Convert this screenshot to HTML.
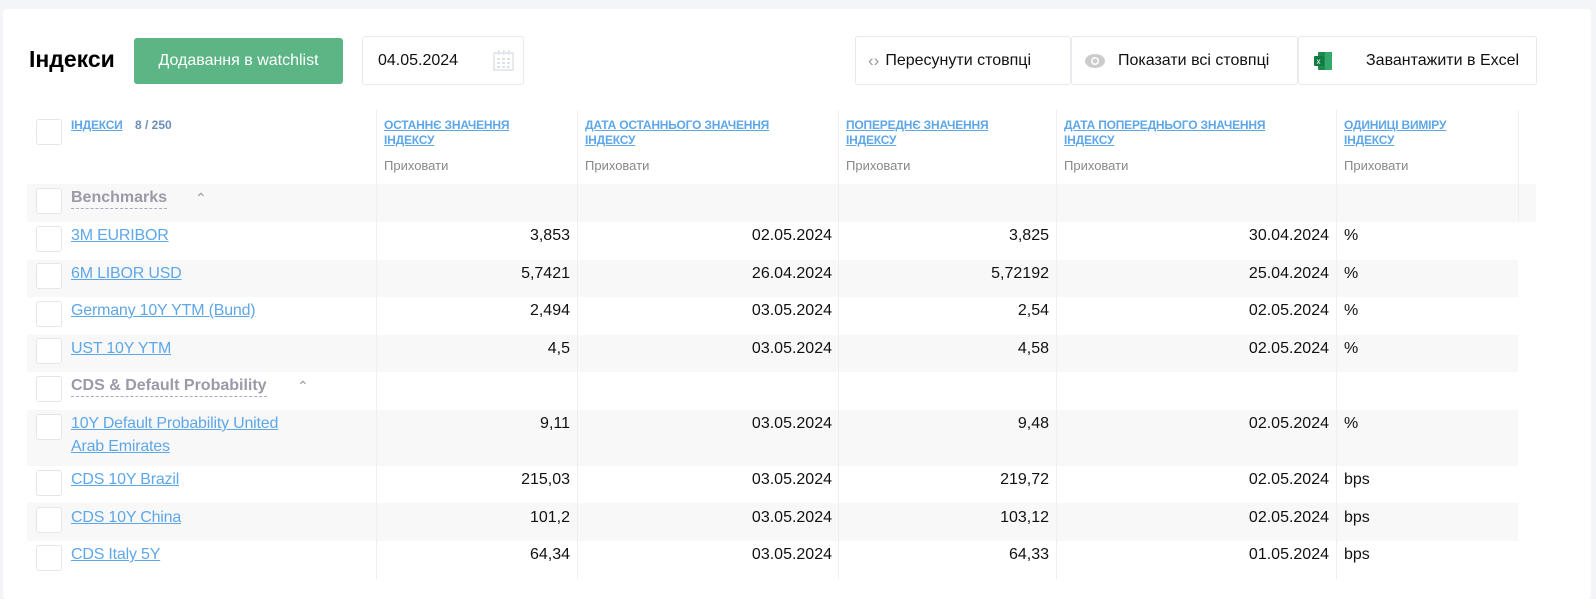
<!DOCTYPE html>
<html><head><meta charset="utf-8"><style>
*{box-sizing:border-box;margin:0;padding:0}
html,body{width:1596px;height:599px;overflow:hidden}
body{background:#f4f5f8;font-family:"Liberation Sans",Arial,sans-serif;position:relative;color:#111}
.card{position:absolute;left:3px;top:9px;width:1588px;height:590px;background:#fff;border-radius:4px}
.a{position:absolute}
h1{position:absolute;left:29px;top:46px;font-size:23px;font-weight:bold;color:#000}
.btn{position:absolute;background:#fff;border:1px solid #e8eaee;border-radius:3px;font-size:16px;display:flex;align-items:center;color:#111;white-space:nowrap}
.cb{position:absolute;left:36px;width:26px;height:26px;border:1px solid #e3e6ec;border-radius:3px;background:#fff}
.row{position:absolute;left:27px;width:1491px}
.g{background:#f8f8f8}
.lnk{position:absolute;left:71px;color:#5ea7e8;text-decoration:underline;font-size:16px;line-height:23px;letter-spacing:-0.2px}
.num{position:absolute;font-size:16px;text-align:right;white-space:nowrap;line-height:23px}
.vl{position:absolute;top:110px;height:469px;width:1px;background:#eeeff1}
.hd{position:absolute;top:118px;color:#5ea7e8;font-size:12px;font-weight:bold;text-decoration:underline;line-height:15px;letter-spacing:-0.2px}
.hide{position:absolute;top:158px;color:#888;font-size:13px}
.grp{position:absolute;left:71px;color:#9a9aa8;font-weight:bold;font-size:16px;border-bottom:1px dashed #aab;line-height:20px}
.wrap{position:absolute;left:0;top:0;width:1596px;height:599px}
</style></head><body>
<div class="card"></div>
<h1>Індекси</h1>
<div class="a" style="left:134px;top:38px;width:209px;height:46px;background:#5cb585;border-radius:3px;color:#fff;font-size:16px;display:flex;align-items:center;justify-content:center">Додавання в watchlist</div>
<div class="btn" style="left:362px;top:36px;width:162px;height:49px;padding-left:15px">04.05.2024
<svg class="a" style="left:130px;top:13px" width="22" height="22" viewBox="0 0 22 22"><rect x="1" y="3" width="19" height="17" fill="none" stroke="#dde2ea" stroke-width="1.5"/><g fill="#dde2ea"><rect x="5" y="0" width="1.5" height="5"/><rect x="10" y="0" width="1.5" height="5"/><rect x="15" y="0" width="1.5" height="5"/><rect x="4" y="8" width="3" height="2"/><rect x="9" y="8" width="3" height="2"/><rect x="14" y="8" width="3" height="2"/><rect x="4" y="12" width="3" height="2"/><rect x="9" y="12" width="3" height="2"/><rect x="14" y="12" width="3" height="2"/><rect x="4" y="16" width="3" height="2"/><rect x="9" y="16" width="3" height="2"/><rect x="14" y="16" width="3" height="2"/></g></svg></div>
<div class="btn" style="left:855px;top:36px;width:216px;height:49px;padding-left:12px"><span style="color:#999;font-size:17px;margin-right:6px">‹›</span>Пересунути стовпці</div>
<div class="btn" style="left:1071px;top:36px;width:227px;height:49px;padding-left:12px"><svg width="22" height="16" viewBox="0 0 22 16" style="margin-right:12px"><ellipse cx="11" cy="8" rx="10" ry="7" fill="#ccc"/><circle cx="11" cy="8" r="4" fill="#fff"/><circle cx="11" cy="8" r="2.5" fill="#ccc"/></svg>Показати всі стовпці</div>
<div class="btn" style="left:1298px;top:36px;width:239px;height:49px;padding-left:14px"><svg width="20" height="20" viewBox="0 0 20 20" style="margin-right:33px"><rect x="5" y="1" width="14" height="18" rx="1" fill="#1e8a4c"/><rect x="12" y="1" width="7" height="18" fill="#33a86a"/><rect x="1" y="5" width="10" height="10" rx="1" fill="#107c41"/><text x="3.5" y="13" font-size="8" fill="#fff" font-family="Liberation Sans">x</text></svg>Завантажити в Excel</div>

<div class="row g" style="top:184px;height:38px;width:1509px"></div>
<div class="row g" style="top:260px;height:37px"></div>
<div class="row g" style="top:335px;height:37px"></div>
<div class="row g" style="top:410px;height:56px"></div>
<div class="row g" style="top:503px;height:38px"></div>

<div class="vl" style="left:376px"></div><div class="vl" style="left:577px"></div><div class="vl" style="left:838px"></div><div class="vl" style="left:1056px"></div><div class="vl" style="left:1336px"></div><div class="vl" style="left:1518px;height:112px"></div>

<div class="cb" style="top:119px"></div>
<div class="hd" style="left:71px">ІНДЕКСИ</div><div class="a" style="left:135px;top:118px;font-size:12px;font-weight:bold;color:#6b8fb8">8 / 250</div>
<div class="hd" style="left:384px">ОСТАННЄ ЗНАЧЕННЯ<br>ІНДЕКСУ</div>
<div class="hd" style="left:585px">ДАТА ОСТАННЬОГО ЗНАЧЕННЯ<br>ІНДЕКСУ</div>
<div class="hd" style="left:846px">ПОПЕРЕДНЄ ЗНАЧЕННЯ<br>ІНДЕКСУ</div>
<div class="hd" style="left:1064px">ДАТА ПОПЕРЕДНЬОГО ЗНАЧЕННЯ<br>ІНДЕКСУ</div>
<div class="hd" style="left:1344px">ОДИНИЦІ ВИМІРУ<br>ІНДЕКСУ</div>
<div class="hide" style="left:384px">Приховати</div><div class="hide" style="left:585px">Приховати</div><div class="hide" style="left:846px">Приховати</div><div class="hide" style="left:1064px">Приховати</div><div class="hide" style="left:1344px">Приховати</div>

<div class="cb" style="top:188px"></div><div class="grp" style="top:188px">Benchmarks</div><div class="a" style="left:195px;top:190px;color:#999;font-size:14px">⌃</div>
<div class="cb" style="top:376px"></div><div class="grp" style="top:376px">CDS &amp; Default Probability</div><div class="a" style="left:297px;top:378px;color:#999;font-size:14px">⌃</div>

<div class="cb" style="top:226px"></div><a class="lnk" style="top:224px">3M EURIBOR</a>
<div class="cb" style="top:263px"></div><a class="lnk" style="top:262px">6M LIBOR USD</a>
<div class="cb" style="top:301px"></div><a class="lnk" style="top:299px">Germany 10Y YTM (Bund)</a>
<div class="cb" style="top:338px"></div><a class="lnk" style="top:337px">UST 10Y YTM</a>
<div class="cb" style="top:414px"></div><a class="lnk" style="top:412px">10Y Default Probability United<br>Arab Emirates</a>
<div class="cb" style="top:470px"></div><a class="lnk" style="top:468px">CDS 10Y Brazil</a>
<div class="cb" style="top:507px"></div><a class="lnk" style="top:506px">CDS 10Y China</a>
<div class="cb" style="top:545px"></div><a class="lnk" style="top:543px">CDS Italy 5Y</a>

<div class="wrap">
<div class="num" style="top:224px;right:1026px">3,853</div><div class="num" style="top:224px;right:764px">02.05.2024</div><div class="num" style="top:224px;right:547px">3,825</div><div class="num" style="top:224px;right:267px">30.04.2024</div><div class="num" style="top:224px;left:1344px">%</div>
<div class="num" style="top:262px;right:1026px">5,7421</div><div class="num" style="top:262px;right:764px">26.04.2024</div><div class="num" style="top:262px;right:547px">5,72192</div><div class="num" style="top:262px;right:267px">25.04.2024</div><div class="num" style="top:262px;left:1344px">%</div>
<div class="num" style="top:299px;right:1026px">2,494</div><div class="num" style="top:299px;right:764px">03.05.2024</div><div class="num" style="top:299px;right:547px">2,54</div><div class="num" style="top:299px;right:267px">02.05.2024</div><div class="num" style="top:299px;left:1344px">%</div>
<div class="num" style="top:337px;right:1026px">4,5</div><div class="num" style="top:337px;right:764px">03.05.2024</div><div class="num" style="top:337px;right:547px">4,58</div><div class="num" style="top:337px;right:267px">02.05.2024</div><div class="num" style="top:337px;left:1344px">%</div>
<div class="num" style="top:412px;right:1026px">9,11</div><div class="num" style="top:412px;right:764px">03.05.2024</div><div class="num" style="top:412px;right:547px">9,48</div><div class="num" style="top:412px;right:267px">02.05.2024</div><div class="num" style="top:412px;left:1344px">%</div>
<div class="num" style="top:468px;right:1026px">215,03</div><div class="num" style="top:468px;right:764px">03.05.2024</div><div class="num" style="top:468px;right:547px">219,72</div><div class="num" style="top:468px;right:267px">02.05.2024</div><div class="num" style="top:468px;left:1344px">bps</div>
<div class="num" style="top:506px;right:1026px">101,2</div><div class="num" style="top:506px;right:764px">03.05.2024</div><div class="num" style="top:506px;right:547px">103,12</div><div class="num" style="top:506px;right:267px">02.05.2024</div><div class="num" style="top:506px;left:1344px">bps</div>
<div class="num" style="top:543px;right:1026px">64,34</div><div class="num" style="top:543px;right:764px">03.05.2024</div><div class="num" style="top:543px;right:547px">64,33</div><div class="num" style="top:543px;right:267px">01.05.2024</div><div class="num" style="top:543px;left:1344px">bps</div>
</div>
</body></html>
